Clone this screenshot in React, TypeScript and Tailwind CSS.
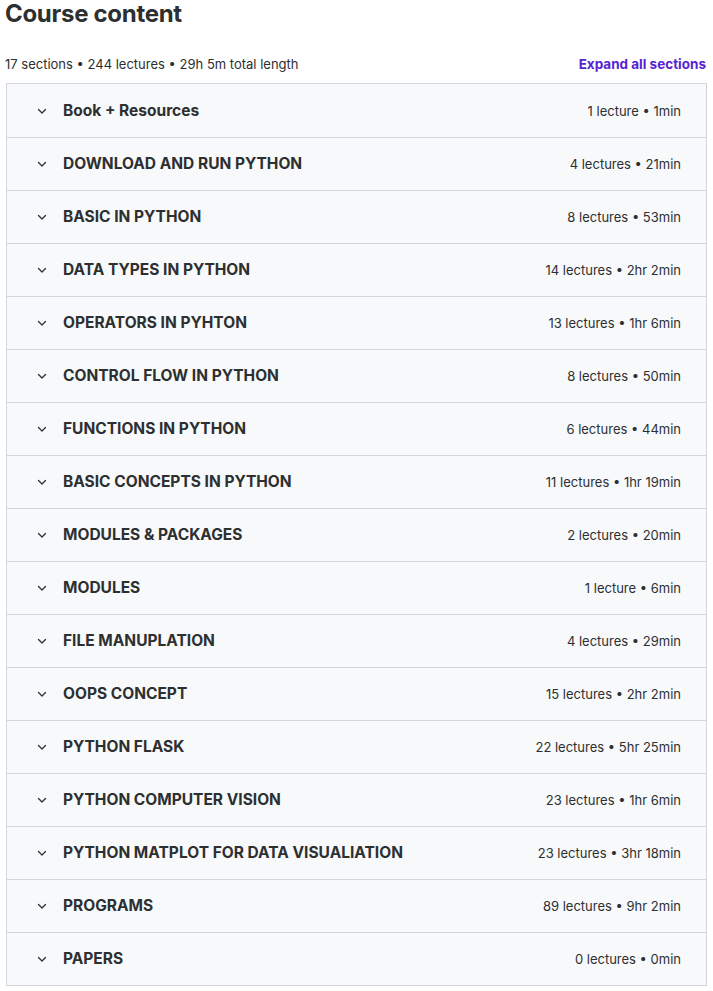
import React from "react";

type Section = { title: string; meta: string };

const sections: Section[] = [
  { title: "Book + Resources", meta: "1 lecture • 1min" },
  { title: "DOWNLOAD AND RUN PYTHON", meta: "4 lectures • 21min" },
  { title: "BASIC IN PYTHON", meta: "8 lectures • 53min" },
  { title: "DATA TYPES IN PYTHON", meta: "14 lectures • 2hr 2min" },
  { title: "OPERATORS IN PYHTON", meta: "13 lectures • 1hr 6min" },
  { title: "CONTROL FLOW IN PYTHON", meta: "8 lectures • 50min" },
  { title: "FUNCTIONS IN PYTHON", meta: "6 lectures • 44min" },
  { title: "BASIC CONCEPTS IN PYTHON", meta: "11 lectures • 1hr 19min" },
  { title: "MODULES & PACKAGES", meta: "2 lectures • 20min" },
  { title: "MODULES", meta: "1 lecture • 6min" },
  { title: "FILE MANUPLATION", meta: "4 lectures • 29min" },
  { title: "OOPS CONCEPT", meta: "15 lectures • 2hr 2min" },
  { title: "PYTHON FLASK", meta: "22 lectures • 5hr 25min" },
  { title: "PYTHON COMPUTER VISION", meta: "23 lectures • 1hr 6min" },
  { title: "PYTHON MATPLOT FOR DATA VISUALIATION", meta: "23 lectures • 3hr 18min" },
  { title: "PROGRAMS", meta: "89 lectures • 9hr 2min" },
  { title: "PAPERS", meta: "0 lectures • 0min" },
];

function Chevron() {
  return (
    <svg width="12" height="12" viewBox="0 0 24 24" fill="none" className="shrink-0">
      <path d="M5 9l7 7 7-7" stroke="#2d2f31" strokeWidth="2.6" strokeLinecap="round" strokeLinejoin="round" />
    </svg>
  );
}

export default function App() {
  return (
    <div
      className="bg-white text-[#2d2f31] px-[6px] pb-[4px]"
      style={{ fontFamily: "Inter, 'Noto Sans', sans-serif" }}
    >
      <h2 className="text-[24px] font-bold leading-[28px] tracking-[-0.3px] -ml-[1px]">Course content</h2>
      <div className="flex items-end justify-between mt-[27px] h-[18px] -ml-[1px] w-[701px]">
        <span className="text-[13px] leading-[18px]">17 sections • 244 lectures • 29h 5m total length</span>
        <button className="text-[13.5px] leading-[18px] font-bold text-[#5624d0]">Expand all sections</button>
      </div>
      <div className="mt-[10px] border border-[#d1d7dc] w-[701px]">
        {sections.map((s, i) => (
          <div
            key={i}
            className={
              "flex items-center justify-between h-[53px] bg-[#f7f9fa] pl-[29px] pr-[25px] " +
              (i > 0 ? "border-t border-[#d1d7dc]" : "")
            }
          >
            <div className="flex items-center gap-[15px]">
              <Chevron />
              <span className="text-[15.5px] font-bold leading-[20px]">{s.title}</span>
            </div>
            <span className="text-[13px] leading-[18px]">{s.meta}</span>
          </div>
        ))}
      </div>
    </div>
  );
}
